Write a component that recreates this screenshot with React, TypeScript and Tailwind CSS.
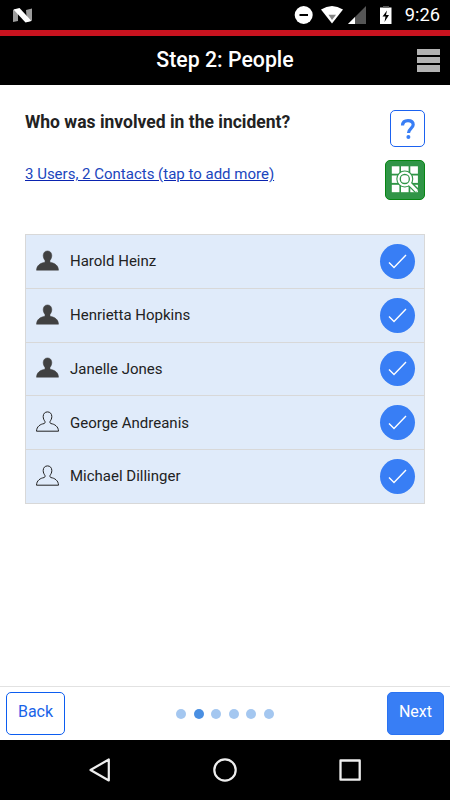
interface Person {
  name: string;
  type: "user" | "contact";
}

const people: Person[] = [
  { name: "Harold Heinz", type: "user" },
  { name: "Henrietta Hopkins", type: "user" },
  { name: "Janelle Jones", type: "user" },
  { name: "George Andreanis", type: "contact" },
  { name: "Michael Dillinger", type: "contact" },
];

const TOTAL_STEPS = 6;
const CURRENT_STEP = 2;

function StatusBar() {
  return (
    <div className="flex h-[30px] shrink-0 items-center justify-between bg-black pl-[13px] pr-[10px]">
      <svg width="19" height="15" viewBox="0 0 19 15">
        <path d="M0 2 5 1V13L0 14ZM13 2 19 0.5V12.500L14 14Z" fill="#9c9c9c" />
        <path d="M0.500 1.500 6.500 0 18.500 13 12.500 14.500Z" fill="#fff" />
      </svg>
      <div className="flex items-center">
        <svg width="98" height="20" viewBox="0 0 98 20">
          {/* do not disturb */}
          <circle cx="9.700" cy="10" r="9" fill="#fff" />
          <path d="M5.500 10H14" stroke="#000" strokeWidth="2" />
          {/* wifi */}
          <path d="M27 4.500Q38-2.500 49 4.500L38 18.500Z" fill="#fff" />
          <path d="M34.500 9.700H42L38 15Z" fill="#858585" />
          {/* signal */}
          <path d="M72 1V19H54Z" fill="#555" />
          <path d="M61 12V19H54Z" fill="#fff" />
          {/* battery */}
          <path d="M86 2.500H97.500V19H86Z" fill="#fff" />
          <path d="M89 1H95V2.500H89Z" fill="#555" />
          <path d="M93 5.500 88.500 11.500H91.500L90.500 17 95 10H92Z" fill="#000" />
        </svg>
        <span className="ml-[13px] text-[18.300px] leading-[30px] text-white">9:26</span>
      </div>
    </div>
  );
}

function Header() {
  return (
    <header className="grid h-[55px] shrink-0 grid-cols-[1fr_auto_1fr] items-center border-t-[6px] border-[#c8131f] bg-black px-[10px]">
      <h1 className="col-start-2 pb-px text-[21.300px] font-medium leading-6 text-white">Step 2: People</h1>
      <button className="flex flex-col gap-[2px] justify-self-end pb-px" aria-label="Menu">
        <span className="h-[6px] w-[23px] bg-[#b3b3b3]" />
        <span className="h-[6px] w-[23px] bg-[#b3b3b3]" />
        <span className="h-[7px] w-[23px] bg-[#b3b3b3]" />
      </button>
    </header>
  );
}

function ScanIcon() {
  const cells = [0.5, 9.700, 19];
  return (
    <svg width="28" height="28" viewBox="0 0 28 28" className="shrink-0">
      {cells.map((y) => cells.map((x) => <rect key={`${x}-${y}`} x={x + 0.3} y={y - 0.2} width="7.600" height="7.400" fill="#fff" />))}
      <circle cx="13.800" cy="13" r="8.500" fill="#309547" />
      <path d="M18 17 26 25" stroke="#309547" strokeWidth="5.500" />
      <circle cx="13.800" cy="13" r="6.300" fill="#309547" stroke="#fff" strokeWidth="2.200" />
      <rect x="10" y="9.200" width="7.600" height="7.600" rx="3" fill="#fff" />
      <path d="M18.200 17.400 25.800 25" stroke="#fff" strokeWidth="3" />
    </svg>
  );
}

function PersonIcon({ filled }: { filled: boolean }) {
  return (
    <svg width="24" height="22" viewBox="0 0 24 22" className="mb-px shrink-0">
      <path
        d="M11.500 0.900C9 0.900 7.200 2.700 7.200 5.400C7.200 7.700 8 9 8.900 10.300C9.300 11.300 9 12.300 8 12.600C6 13 4.600 13.400 3 14.800C1.400 16.100 0.600 17.900 0.500 20.200H22.500C22.400 17.900 21.600 16.100 20 14.800C18.400 13.400 17 13 15 12.600C14 12.300 13.700 11.300 14.100 10.300C15 9 15.800 7.700 15.800 5.400C15.800 2.700 14 0.900 11.500 0.900Z"
        fill={filled ? "#414141" : "none"}
        stroke={filled ? "#414141" : "#222"}
        strokeWidth={filled ? 0.5 : 1}
      />
    </svg>
  );
}

function PersonRow({ person }: { person: Person }) {
  return (
    <li className="flex h-[53.800px] items-center border-b border-[#d8d8d8] pl-[10px] pr-[9px]">
      <PersonIcon filled={person.type === "user"} />
      <span className="ml-[10px] flex-1 text-[15px] text-[#222]">{person.name}</span>
      <span className="flex size-[35px] items-center justify-center rounded-full bg-[#387ef5]">
        <svg width="35" height="35" viewBox="0 0 35 35" fill="none" stroke="#fff" strokeWidth="1.400">
          <path d="M9 18.500 14 23.500 26 11" />
        </svg>
      </span>
    </li>
  );
}

function Footer() {
  return (
    <footer className="flex h-[54px] shrink-0 items-start justify-between border-t border-[#e2e2e2] bg-white px-[6px] pt-[5px]">
      <button className="h-[43px] w-[59px] rounded-[5px] border border-[#0c5df0] pb-[4px] text-base text-[#1a63e8]">Back</button>
      <div className="flex gap-[7.500px] pr-[2px] pt-[17px]">
        {Array.from({ length: TOTAL_STEPS }, (_, i) => (
          <span
            key={i}
            className={`size-[10px] rounded-full ${i + 1 === CURRENT_STEP ? "bg-[#4a8fe2]" : "bg-[#a4c7f0]"}`}
          />
        ))}
      </div>
      <button className="h-[43px] w-[57px] rounded-[5px] border border-[#2a73f2] bg-[#387ef5] pb-[4px] text-base text-white">Next</button>
    </footer>
  );
}

function NavBar() {
  return (
    <nav className="flex h-[60px] shrink-0 items-center justify-center gap-[97px] bg-black">
      <svg width="28" height="28" viewBox="0 0 28 28" fill="none" stroke="#eee" strokeWidth="2.200" strokeLinejoin="round">
        <path d="M22.800 3.500V24.500L4.500 14Z" />
      </svg>
      <svg width="28" height="28" viewBox="0 0 28 28" fill="none" stroke="#eee" strokeWidth="2.200">
        <circle cx="14" cy="14" r="10.700" />
      </svg>
      <svg width="28" height="28" viewBox="0 0 28 28" fill="none" stroke="#eee" strokeWidth="2.300" strokeLinejoin="round">
        <rect x="4.500" y="4.500" width="19.200" height="19.200" />
      </svg>
    </nav>
  );
}

export default function App() {
  return (
    <div className="flex h-[800px] w-[450px] flex-col overflow-hidden bg-white font-['Roboto',sans-serif]">
      <StatusBar />
      <Header />
      <main className="flex-1 px-[25px] pt-[25px]">
        <div className="flex items-start justify-between">
          <h2 className="text-[17.500px] font-bold leading-6 text-[#222]">Who was involved in the incident?</h2>
          <button className="flex h-[37px] w-[35px] items-center justify-center rounded-[5px] border border-[#1b62f0]" aria-label="Help">
            <svg width="16" height="22" viewBox="0 0 16 22" fill="none" stroke="#387ef5" strokeWidth="3.200">
              <path d="M2.500 7.500C2.700 4 4.800 2.600 8 2.600C11.200 2.600 13.200 4.200 13.200 6.700C13.200 10 8.500 10.800 8.500 15" />
              <circle cx="8.400" cy="19" r="2" fill="#387ef5" stroke="none" />
            </svg>
          </button>
        </div>
        <div className="mt-[13px] flex items-start justify-between">
          <a className="pt-[2px] text-[15px] leading-6 text-[#1a46bd] underline decoration-[#0a23b0]">3 Users, 2 Contacts (tap to add more)</a>
          <button className="flex size-[40px] items-center justify-center rounded-[5px] border border-[#078512] bg-[#309547]" aria-label="Scan">
            <ScanIcon />
          </button>
        </div>
        <ul className="mt-[34px] border border-b-0 border-[#d8d8d8] bg-[#e0ebfa]">
          {people.map((p) => (
            <PersonRow key={p.name} person={p} />
          ))}
        </ul>
      </main>
      <Footer />
      <NavBar />
    </div>
  );
}
